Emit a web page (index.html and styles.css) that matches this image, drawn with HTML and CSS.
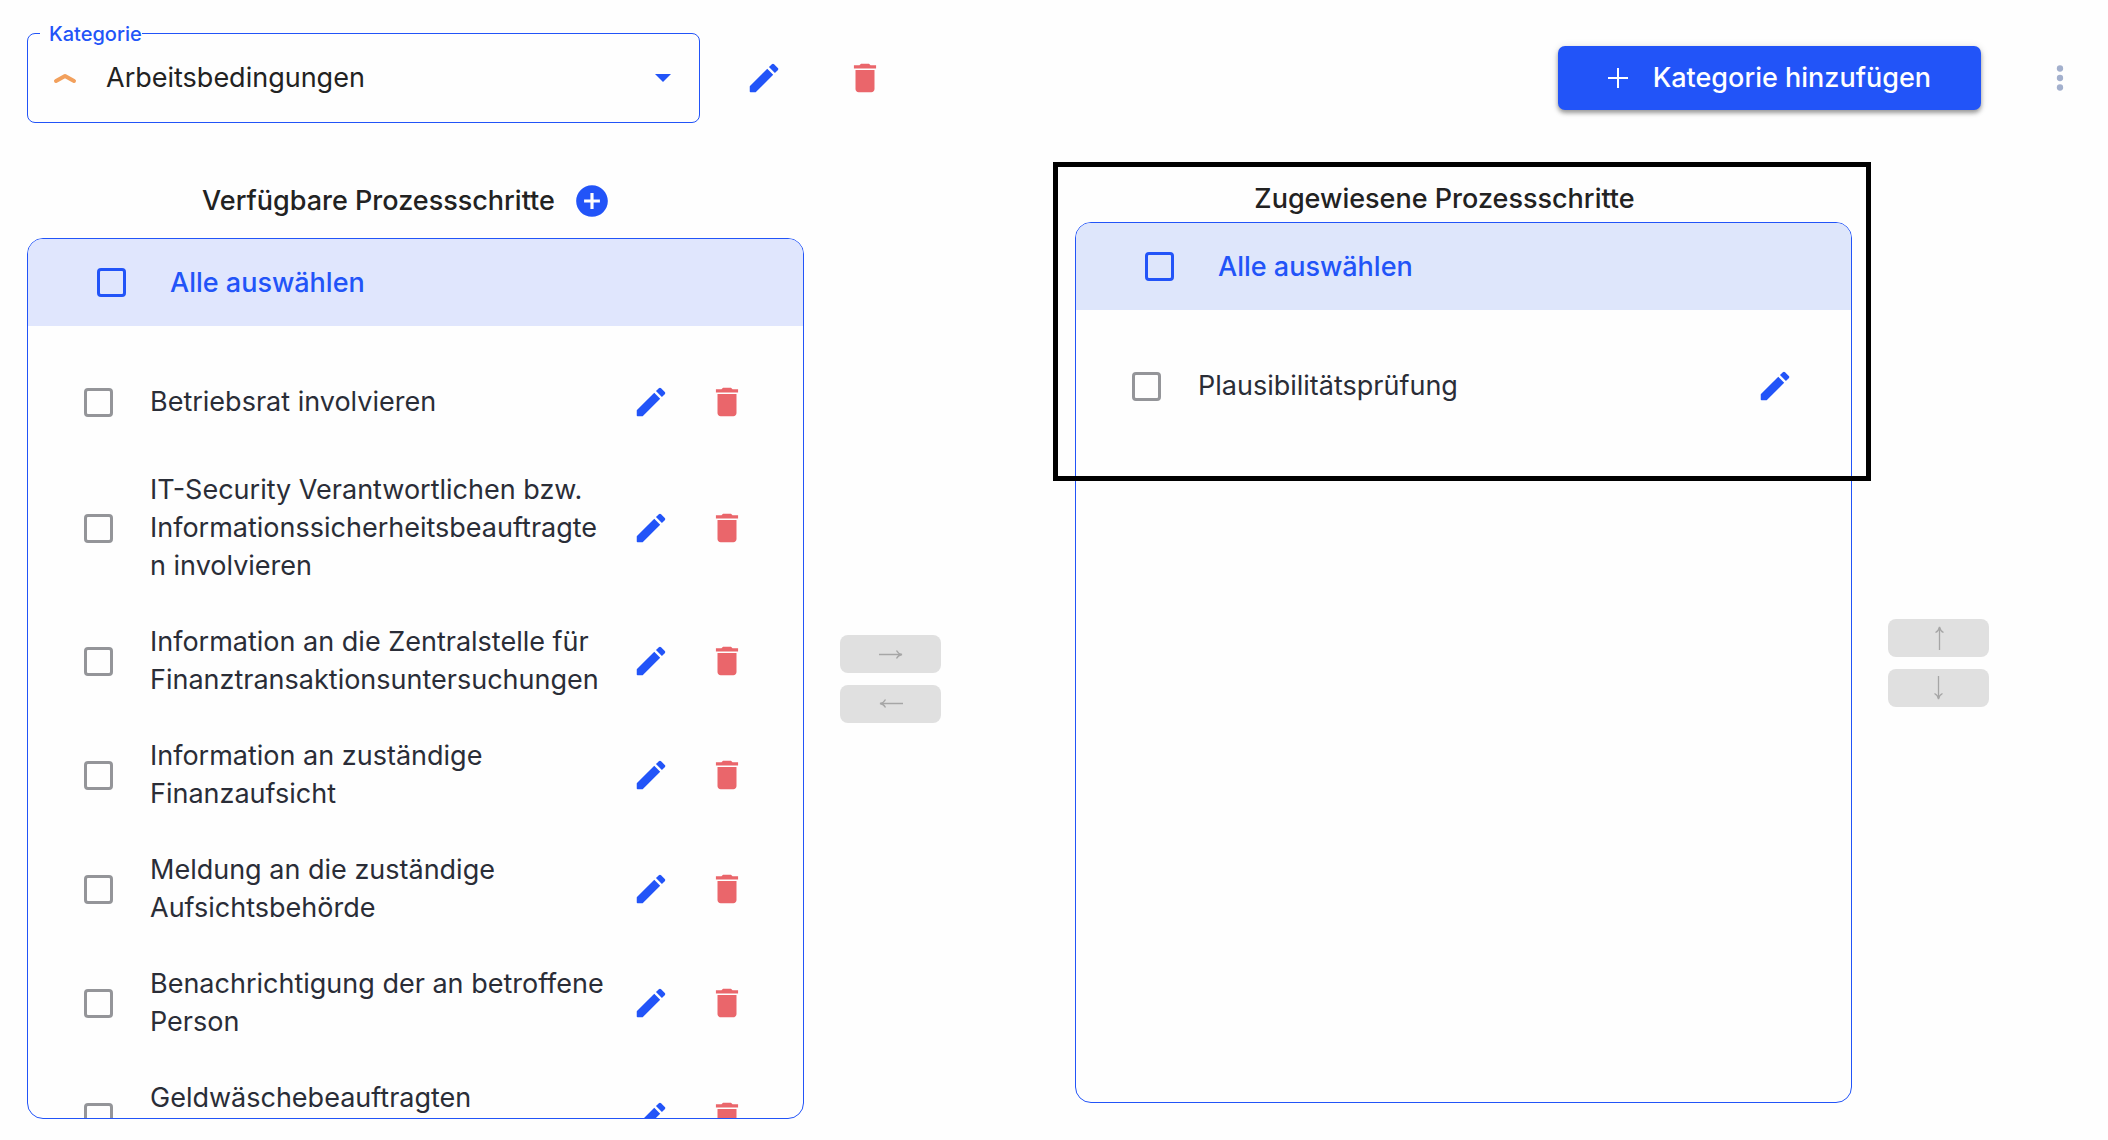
FILE: index.html
```html
<!DOCTYPE html>
<html lang="de">
<head>
<meta charset="utf-8">
<title>Prozessschritte</title>
<meta name="viewport" content="width=device-width, initial-scale=1">
<link rel="stylesheet" href="styles.css">
</head>
<body>
<svg class="sprite" aria-hidden="true">
  <symbol id="edit" viewBox="0 0 24 24"><path d="M3 17.46v3.04c0 .28.22.5.5.5h3.04c.13 0 .26-.05.35-.15L17.81 9.94l-3.75-3.75L3.15 17.1c-.1.1-.15.22-.15.36zM20.71 7.04a1 1 0 0 0 0-1.41l-2.34-2.34a1 1 0 0 0-1.41 0l-1.83 1.83 3.75 3.75 1.83-1.83z"/></symbol>
  <symbol id="trash" viewBox="0 0 24 24"><path d="M6 19c0 1.100.9 2 2 2h8c1.100 0 2-.9 2-2V7H6v12zM19 4h-3.500l-1-1h-5l-1 1H5v2h14V4z"/></symbol>
  <symbol id="add-circle" viewBox="0 0 24 24"><path d="M12 2C6.480 2 2 6.480 2 12s4.480 10 10 10 10-4.480 10-10S17.520 2 12 2zm5 11h-4v4h-2v-4H7v-2h4V7h2v4h4v2z"/></symbol>
  <symbol id="more" viewBox="0 0 24 24"><circle cx="12" cy="6" r="2"/><circle cx="12" cy="12" r="2"/><circle cx="12" cy="18" r="2"/></symbol>
  <symbol id="arrow" viewBox="0 0 26 26"><path d="M1 13.500h23M18.500 9.500c1 2 3 3.500 5.500 4-2.500.5-4.500 2-5.500 4" fill="none" stroke="currentColor" stroke-width="1.300"/></symbol>
</svg>

<header class="topbar">
  <div class="field">
    <label class="field-label" for="category">Kategorie</label>
    <svg class="field-mark" viewBox="0 0 24 12" aria-hidden="true"><path d="M3 9l9-5 9 5" fill="none" stroke="currentColor" stroke-width="4" stroke-linecap="round" stroke-linejoin="round"/></svg>
    <select class="field-select" id="category"><option>Arbeitsbedingungen</option></select>
    <svg class="field-caret" viewBox="0 0 16 8" aria-hidden="true"><path d="M0 0l8 8 8-8z"/></svg>
  </div>
  <button class="icon-button edit" type="button" aria-label="Kategorie bearbeiten"><svg class="icon"><use href="#edit"/></svg></button>
  <button class="icon-button delete" type="button" aria-label="Kategorie löschen"><svg class="icon"><use href="#trash"/></svg></button>
  <button class="add-button" type="button"><svg class="add-plus" viewBox="0 0 20 20" aria-hidden="true"><path d="M10 0v20M0 10h20" stroke="currentColor" stroke-width="2"/></svg>Kategorie hinzufügen</button>
  <button class="icon-button more" type="button" aria-label="Mehr"><svg class="icon"><use href="#more"/></svg></button>
</header>

<main class="columns">
  <section class="half">
    <div class="list">
      <div class="list-title">
        <h2 class="heading">Verfügbare Prozessschritte</h2>
        <button class="icon-button edit" type="button" aria-label="Prozessschritt hinzufügen"><svg class="icon"><use href="#add-circle"/></svg></button>
      </div>
      <div class="panel">
        <label class="select-all"><input class="check" type="checkbox">Alle auswählen</label>
        <ul class="rows">
          <li class="row"><input class="check" type="checkbox" id="s1"><label class="row-text" for="s1">Betriebsrat involvieren</label>
            <button class="row-button edit" type="button" aria-label="Bearbeiten"><svg class="icon"><use href="#edit"/></svg></button><button class="row-button delete" type="button" aria-label="Löschen"><svg class="icon"><use href="#trash"/></svg></button></li>
          <li class="row"><input class="check" type="checkbox" id="s2"><label class="row-text" for="s2">IT-Security Verantwortlichen bzw. Informationssicherheitsbeauftragte<br>n involvieren</label>
            <button class="row-button edit" type="button" aria-label="Bearbeiten"><svg class="icon"><use href="#edit"/></svg></button><button class="row-button delete" type="button" aria-label="Löschen"><svg class="icon"><use href="#trash"/></svg></button></li>
          <li class="row"><input class="check" type="checkbox" id="s3"><label class="row-text" for="s3">Information an die Zentralstelle für Finanztransaktionsuntersuchungen</label>
            <button class="row-button edit" type="button" aria-label="Bearbeiten"><svg class="icon"><use href="#edit"/></svg></button><button class="row-button delete" type="button" aria-label="Löschen"><svg class="icon"><use href="#trash"/></svg></button></li>
          <li class="row"><input class="check" type="checkbox" id="s4"><label class="row-text" for="s4">Information an zuständige Finanzaufsicht</label>
            <button class="row-button edit" type="button" aria-label="Bearbeiten"><svg class="icon"><use href="#edit"/></svg></button><button class="row-button delete" type="button" aria-label="Löschen"><svg class="icon"><use href="#trash"/></svg></button></li>
          <li class="row"><input class="check" type="checkbox" id="s5"><label class="row-text" for="s5">Meldung an die zuständige Aufsichtsbehörde</label>
            <button class="row-button edit" type="button" aria-label="Bearbeiten"><svg class="icon"><use href="#edit"/></svg></button><button class="row-button delete" type="button" aria-label="Löschen"><svg class="icon"><use href="#trash"/></svg></button></li>
          <li class="row"><input class="check" type="checkbox" id="s6"><label class="row-text" for="s6">Benachrichtigung der an betroffene Person</label>
            <button class="row-button edit" type="button" aria-label="Bearbeiten"><svg class="icon"><use href="#edit"/></svg></button><button class="row-button delete" type="button" aria-label="Löschen"><svg class="icon"><use href="#trash"/></svg></button></li>
          <li class="row"><input class="check" type="checkbox" id="s7"><label class="row-text" for="s7">Geldwäschebeauftragten<br>involvieren</label>
            <button class="row-button edit" type="button" aria-label="Bearbeiten"><svg class="icon"><use href="#edit"/></svg></button><button class="row-button delete" type="button" aria-label="Löschen"><svg class="icon"><use href="#trash"/></svg></button></li>
        </ul>
      </div>
    </div>
    <div class="movers">
      <button class="move" type="button" disabled aria-label="Zuweisen"><svg class="arrow"><use href="#arrow"/></svg></button>
      <button class="move" type="button" disabled aria-label="Entfernen"><svg class="arrow left"><use href="#arrow"/></svg></button>
    </div>
  </section>

  <section class="half assigned">
    <div class="list">
      <div class="list-title">
        <h2 class="heading">Zugewiesene Prozessschritte</h2>
      </div>
      <div class="panel">
        <label class="select-all"><input class="check" type="checkbox">Alle auswählen</label>
        <ul class="rows">
          <li class="row"><input class="check" type="checkbox" id="a1"><label class="row-text" for="a1">Plausibilitätsprüfung</label>
            <button class="row-button edit" type="button" aria-label="Bearbeiten"><svg class="icon"><use href="#edit"/></svg></button></li>
        </ul>
      </div>
      <div class="highlight"></div>
    </div>
    <div class="movers">
      <button class="move" type="button" disabled aria-label="Nach oben"><svg class="arrow up"><use href="#arrow"/></svg></button>
      <button class="move" type="button" disabled aria-label="Nach unten"><svg class="arrow down"><use href="#arrow"/></svg></button>
    </div>
  </section>
</main>
</body>
</html>
```
FILE: styles.css
```css
:root {
  --blue: #2254f8;
  --red: #ea666b;
  --ink: #222222;
  --row-ink: #2a2d37;
}

* { box-sizing: border-box; }

body {
  margin: 0;
  background: #fefefe;
  color: var(--ink);
  font-family: Inter, "Open Sans", sans-serif;
  font-size: 27px;
  line-height: 38px;
}

button, select, input { font: inherit; color: inherit; margin: 0; }

button {
  display: flex;
  align-items: center;
  justify-content: center;
  padding: 0;
  border: 0;
  background: none;
}

.sprite { display: none; }
.icon { width: 38px; height: 38px; fill: currentColor; }

.topbar {
  display: flex;
  align-items: center;
  gap: 27px;
  padding: 33px 11px 0 27px;
}

.field {
  position: relative;
  flex: 0 1 673px;
}

.field-label {
  position: absolute;
  top: -14px;
  left: 13px;
  padding: 0 0 0 9px;
  background: #fefefe;
  color: var(--blue);
  font-size: 20px;
  font-weight: 500;
  line-height: 30px;
}

.field-mark {
  position: absolute;
  top: 39px;
  left: 26px;
  width: 24px;
  height: 12px;
  color: #f2a05c;
}

.field-caret {
  position: absolute;
  top: 41px;
  right: 29px;
  width: 16px;
  height: 8px;
  fill: var(--blue);
  pointer-events: none;
}

.field-select {
  display: block;
  width: 100%;
  height: 90px;
  padding: 0 60px 0 78px;
  border: 1px solid var(--blue);
  border-radius: 8px;
  background: transparent;
  appearance: none;
}

.icon-button { flex: none; width: 74px; height: 74px; }
.edit { color: var(--blue); }
.delete { color: var(--red); }
.more { margin-left: 15px; color: #a3b0cd; }

.add-button {
  gap: 25px;
  height: 64px;
  margin-left: auto;
  padding: 0 50px;
  border-radius: 7px;
  background: var(--blue);
  box-shadow: 0 3px 4px rgba(0, 0, 0, 0.35), 0 1px 8px rgba(0, 0, 0, 0.12);
  color: #ffffff;
  font-weight: 500;
  white-space: nowrap;
}

.add-plus { width: 20px; height: 20px; }

.columns {
  display: grid;
  grid-template-columns: 1fr 1fr;
  gap: 134px;
  align-items: start;
  padding: 41px 119px 21px 27px;
}

.half { display: flex; gap: 36px; min-width: 0; }

.list {
  position: relative;
  flex: 1;
  min-width: 0;
}

.list-title {
  display: flex;
  align-items: center;
  justify-content: center;
  height: 74px;
}

.assigned .list-title { height: 58px; padding: 12px 38px 0 0; }

.heading {
  margin: 0;
  font-size: 27px;
  font-weight: 500;
  white-space: nowrap;
}

.panel {
  height: calc(100vh - 259px);
  min-height: 400px;
  overflow-y: auto;
  scrollbar-width: none;
  border: 1px solid var(--blue);
  border-radius: 16px;
}

.select-all {
  display: flex;
  align-items: center;
  gap: 44px;
  height: 87px;
  padding-left: 69px;
  background: #e0e6fd;
  color: var(--blue);
  font-weight: 500;
}

.assigned .select-all { background: #dee6fb; }

.check {
  flex: none;
  width: 29px;
  height: 29px;
  border: 3px solid #949599;
  border-radius: 4px;
  appearance: none;
}

.select-all .check { border-color: var(--blue); }

.rows { margin: 0; padding: 26px 38px 26px 56px; list-style: none; }

.row {
  display: flex;
  align-items: center;
  padding: 19px 0;
  color: var(--row-ink);
}

.row-text { flex: 1; min-width: 0; margin-left: 37px; overflow-wrap: anywhere; }
.row-button { flex: none; width: 76px; height: 62px; }

.movers {
  display: flex;
  flex-direction: column;
  justify-content: center;
  gap: 12px;
  flex: none;
  width: 101px;
  padding-top: 74px;
}

.assigned .movers { padding-top: 58px; }

.move { height: 38px; border-radius: 8px; background: #e0e0e0; color: #a6a6a6; }
.arrow { width: 26px; height: 26px; }
.left { transform: rotate(180deg); }
.up { transform: rotate(-90deg); }
.down { transform: rotate(90deg); }

.highlight {
  position: absolute;
  top: -2px;
  right: -19px;
  left: -22px;
  height: 319px;
  border: 5px solid #000000;
  pointer-events: none;
}
```
